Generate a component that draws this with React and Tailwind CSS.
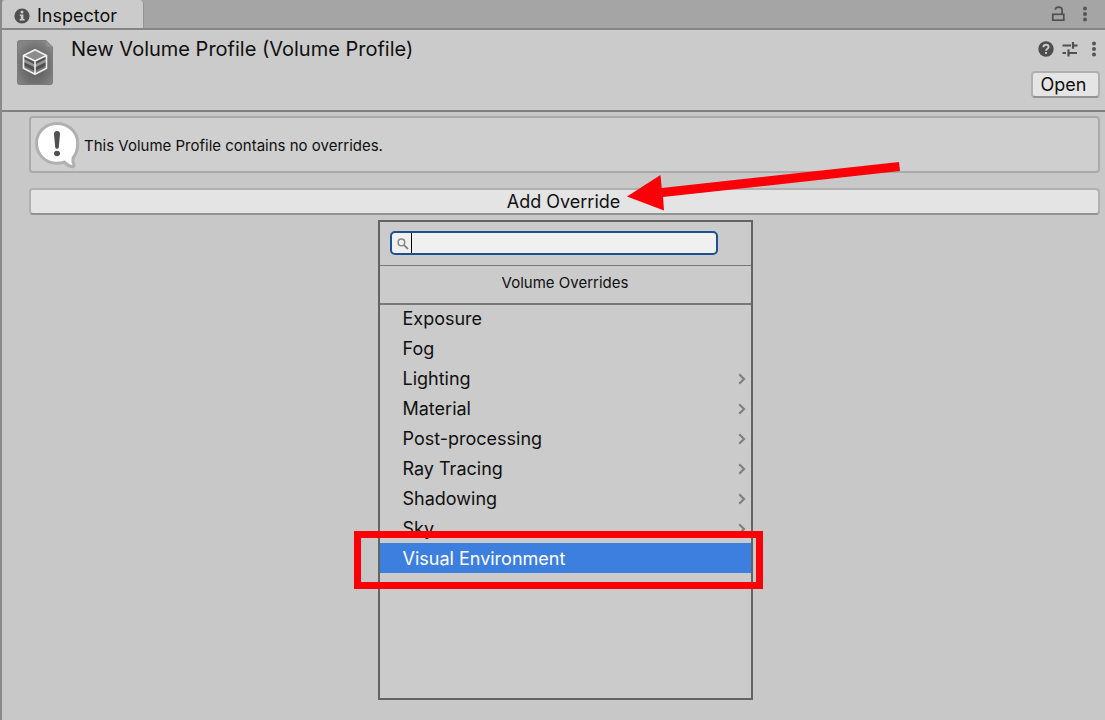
import React from "react";

const overrides = [
  { name: "Exposure" },
  { name: "Fog" },
  { name: "Lighting", group: true },
  { name: "Material", group: true },
  { name: "Post-processing", group: true },
  { name: "Ray Tracing", group: true },
  { name: "Shadowing", group: true },
  { name: "Sky", group: true },
  { name: "Visual Environment", selected: true },
];

function InfoIcon() {
  return (
    <svg className="size-4" viewBox="0 0 16 16" aria-hidden="true">
      <circle cx="8" cy="8" r="7.6" fill="#505050" />
      <circle cx="8" cy="4.1" r="1.5" fill="#cbcbcb" />
      <path d="M5.8 6.5h3.6v4.6h1.2v1.5H5.6v-1.5h1.2V8h-1z" fill="#cbcbcb" />
    </svg>
  );
}

function KebabIcon() {
  return (
    <svg className="h-4 w-[6px]" viewBox="0 0 6 16" fill="#555" aria-hidden="true">
      <circle cx="3" cy="2.4" r="2" />
      <circle cx="3" cy="8" r="2" />
      <circle cx="3" cy="13.6" r="2" />
    </svg>
  );
}

function LockIcon() {
  return (
    <svg className="h-4 w-[14px]" viewBox="0 0 14 16" fill="none" stroke="#505050" strokeWidth="1.7" aria-hidden="true">
      <rect x="1.8" y="8.3" width="11" height="5.9" />
      <path d="M4.200 3.800C4.600 1.900 5.900 1.100 7.500 1.100c2.200 0 3.600 1.300 3.600 3.300v3.800" />
    </svg>
  );
}

function HelpIcon() {
  return (
    <svg className="size-4" viewBox="0 0 16 16" aria-hidden="true">
      <circle cx="8" cy="8" r="7.7" fill="#4d4d4d" />
      <path d="M5.4 6.2C5.4 4.6 6.5 3.7 8 3.7s2.6.9 2.6 2.2C10.6 7.7 8 7.7 8 9.8" fill="none" stroke="#cbcbcb" strokeWidth="1.9" />
      <rect x="7" y="11" width="2" height="1.9" fill="#cbcbcb" />
    </svg>
  );
}

function PresetIcon() {
  return (
    <svg className="size-4" viewBox="0 0 16 16" fill="none" stroke="#505050" aria-hidden="true">
      <path d="M0.500 4.500H9M11 4.500h4.500M0.500 12H4M7 12h8" strokeWidth="1.800" />
      <path d="M11 1v6.800M6.500 8.600v6.800" strokeWidth="2.200" />
    </svg>
  );
}

function ProfileIcon() {
  return (
    <svg className="h-[46px] w-9 shrink-0" viewBox="0 0 36 46" aria-hidden="true">
      <defs>
        <radialGradient id="sheet" cx="50%" cy="58%" r="62%">
          <stop offset="0" stopColor="#585858" />
          <stop offset="0.6" stopColor="#6f6f6f" />
          <stop offset="1" stopColor="#858585" />
        </radialGradient>
      </defs>
      <path d="M2.500.500H29l6.500 6.500v35.500a2 2 0 0 1-2 2H2.500a2 2 0 0 1-2-2v-40a2 2 0 0 1 2-2z" fill="url(#sheet)" stroke="#7d7d7d" />
      <path d="M29 .500V5a2 2 0 0 0 2 2h4.500z" fill="#8f8f8f" />
      <path d="M18 10l11.500 5.500v13L18 34 6.500 28.500v-13z" fill="#505050" />
      <path d="M18 10l11.500 5.500L18 21 6.500 15.500z" fill="#8c8c8c" />
      <path d="M7 19l11 5.500L29 19v3L18 27.500 7 22z" fill="#969696" />
      <path d="M7 25.500L18 31l11-5.500V28L18 33.500 7 28z" fill="#777" />
      <path d="M18 9.800l11.500 5.700v12.800L18 34.300 6.500 28.300V15.500zM6.500 15.500L18 21l11.500-5.500M18 21v13" fill="none" stroke="#f0f0f0" strokeWidth="1.600" strokeLinejoin="round" />
    </svg>
  );
}

function NoticeIcon() {
  return (
    <svg className="h-12 w-[46px] shrink-0" viewBox="0 0 46 48" aria-hidden="true">
      <path
        d="M23 2.500C11.500 2.500 2.500 11 2.500 22.300S11.500 42.300 23 42.300c2.800 0 5-.4 7.200-1.200 2.300 2.400 5 4.200 8.200 4.600 1.500.1 2-.9 1.400-2.100-.9-2-1.100-4-.8-6.600 3-3.600 4.700-8.400 4.700-14.700C43.700 11 34.500 2.500 23 2.500z"
        fill="#fff"
        stroke="#b0b0b0"
        strokeWidth="3"
      />
      <path d="M20 13.200c0-2 1.100-3.200 3-3.200s3 1.200 3 3.200L24.800 26c-.1 1.200-.7 1.800-1.800 1.800s-1.700-.6-1.800-1.800z" fill="#505050" />
      <ellipse cx="23" cy="32.500" rx="3" ry="2.700" fill="#505050" />
    </svg>
  );
}

function SearchIcon() {
  return (
    <svg className="absolute left-[7px] top-[7px] size-3" viewBox="0 0 12 12" fill="none" stroke="#888" aria-hidden="true">
      <circle cx="4.400" cy="4.400" r="3.300" strokeWidth="1.500" />
      <path d="M6.800 6.800L11 11" strokeWidth="1.900" />
    </svg>
  );
}

function Chevron() {
  return (
    <svg className="h-3 w-2" viewBox="0 0 8 12" fill="none" stroke="#808080" strokeWidth="2.200" aria-hidden="true">
      <path d="M1.200 1.200L6 6l-4.800 4.800" />
    </svg>
  );
}

function OverrideMenu() {
  return (
    <div className="absolute left-1/2 top-full mt-[5px] h-[480px] w-[375px] -translate-x-[187px] border-2 border-[#636363] bg-[#cbcbcb]">
      <div className="h-11 border-b border-[#777] px-[10px] pt-[9px]">
        <div className="relative w-[328px]">
          <input
            type="text"
            aria-label="Search overrides"
            className="block h-6 w-full rounded-[5px] border-2 border-[#1d5091] bg-[#f0f0f0] pl-6 pr-2 text-sm outline-none"
          />
          <SearchIcon />
          <span className="absolute bottom-[2px] left-[21px] top-[2px] w-px bg-black" />
        </div>
      </div>
      <h2 className="flex h-[37px] items-center justify-center pb-[3px] text-[15px]">Volume Overrides</h2>
      <ul className="shadow-[inset_0_2px_0_#777]">
        {overrides.map((item) => (
          <li key={item.name} className="relative">
            <button
              type="button"
              className={
                item.selected
                  ? "flex h-[30px] w-full items-center justify-between bg-[#3d7fdf] pl-[23px] pr-[5px] pt-[2px] text-lg text-white"
                  : "flex h-[30px] w-full items-center justify-between pl-[23px] pr-[5px] pt-[2px] text-lg"
              }
            >
              {item.name}
              {item.group && <Chevron />}
            </button>
            {item.selected && (
              <span className="pointer-events-none absolute -bottom-4 -left-[26px] -right-3 -top-3 border-[7px] border-[#fb0007]" />
            )}
          </li>
        ))}
      </ul>
    </div>
  );
}

export default function App() {
  return (
    <div className="min-h-screen border-l-2 border-[#8a8a8a] bg-[#c8c8c8] font-['Inter',sans-serif] text-[#101010]">
      <div className="flex h-[30px] items-stretch justify-between border-b-2 border-[#858585] bg-[#a5a5a5]">
        <div className="flex w-[142px] items-center gap-[7px] rounded-t-[4px] border-r border-[#959595] bg-[#cbcbcb] pl-3 pt-[3px] text-lg">
          <InfoIcon />
          Inspector
        </div>
        <div className="flex items-center gap-[17px] pr-[17px]">
          <button type="button" aria-label="Lock inspector">
            <LockIcon />
          </button>
          <button type="button" aria-label="Window options">
            <KebabIcon />
          </button>
        </div>
      </div>

      <header className="flex h-[82px] justify-between border-b-2 border-[#808080] bg-[#cbcbcb]">
        <div className="flex gap-[18px] pl-[15px] pt-[10px]">
          <ProfileIcon />
          <h1 className="-mt-[5px] text-xl leading-7">New Volume Profile (Volume Profile)</h1>
        </div>
        <div className="flex flex-col items-end pt-[11px]">
          <div className="flex gap-2 pr-2">
            <button type="button" aria-label="Help">
              <HelpIcon />
            </button>
            <button type="button" aria-label="Presets">
              <PresetIcon />
            </button>
            <button type="button" aria-label="More options" className="ml-[5px]">
              <KebabIcon />
            </button>
          </div>
          <button
            type="button"
            className="mr-[5px] mt-[14px] h-[27px] w-[69px] rounded-[4px] border-2 border-[#b0b0b0] border-b-[#939393] bg-[#e5e5e5] pr-1 text-lg leading-none"
          >
            Open
          </button>
        </div>
      </header>

      <main className="pl-[27px] pr-[5px] pt-1">
        <div className="flex h-[57px] items-center rounded-[4px] border-2 border-[#aaa] bg-[#cfcfcf] pl-[3px] text-[15px]">
          <NoticeIcon />
          <p className="pl-1 pt-1">This Volume Profile contains no overrides.</p>
        </div>
        <div className="relative mt-[15px]">
          <button
            type="button"
            className="block h-[27px] w-full rounded-[4px] border-2 border-[#b0b0b0] border-b-[#939393] bg-[#e4e4e4] pr-[2px] text-lg leading-none"
          >
            Add Override
          </button>
          <OverrideMenu />
          <svg className="pointer-events-none absolute -top-7 left-1/2 ml-[62px] h-[52px] w-[274px]" viewBox="0 0 274 52" aria-hidden="true">
            <path d="M0 36.500L33.500 15l1.200 13L272 2l1 9L36 37l1 13.500z" fill="#fb0007" />
          </svg>
        </div>
      </main>
    </div>
  );
}
